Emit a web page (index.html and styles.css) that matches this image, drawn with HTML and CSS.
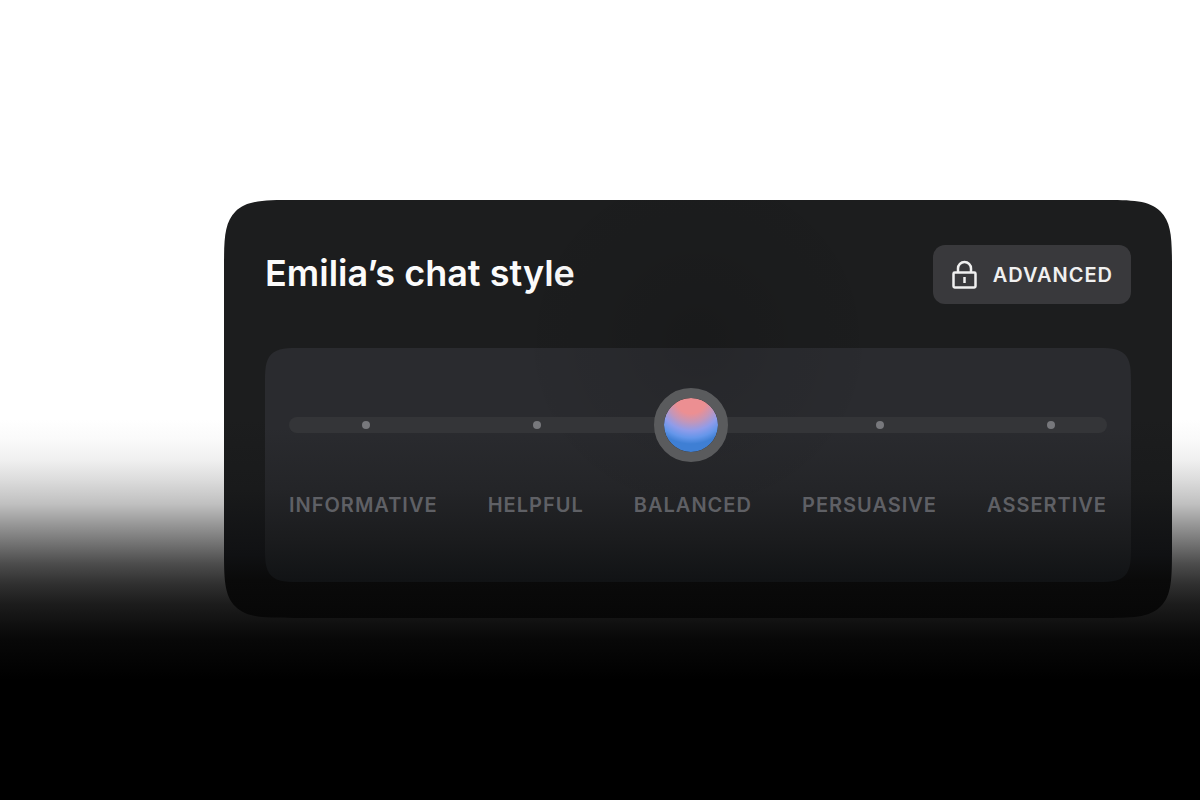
FILE: index.html
```html
<!DOCTYPE html>
<html lang="en">
<head>
    <meta charset="UTF-8">
    <meta name="viewport" content="width=device-width, initial-scale=1.0">
    <title>Chat style</title>
    <link rel="stylesheet" href="styles.css">
</head>
<body>
    <main class="card">
        <div class="card-header">
            <h1 class="title" id="styleTitle">Emilia’s chat style</h1>
            <button class="advanced-btn" type="button">
                <svg width="26" height="30" viewBox="0 0 26 30" fill="none" stroke="currentColor" stroke-width="2.5" aria-hidden="true">
                    <rect x="2.5" y="12.5" width="22" height="15" rx="1.2"/>
                    <path d="M7 12.5V8.5a6.5 6.5 0 0 1 13 0V12.5"/>
                    <path d="M13.5 17v6"/>
                </svg>
                ADVANCED
            </button>
        </div>
        <div class="panel">
            <div class="slider">
                <div class="track">
                    <span class="dot"></span>
                    <span class="dot"></span>
                    <span class="dot"></span>
                    <span class="dot"></span>
                    <span class="dot"></span>
                </div>
                <input class="range" type="range" min="0" max="100" value="49" aria-labelledby="styleTitle">
            </div>
            <div class="labels">
                <span>INFORMATIVE</span>
                <span>HELPFUL</span>
                <span>BALANCED</span>
                <span>PERSUASIVE</span>
                <span>ASSERTIVE</span>
            </div>
        </div>
    </main>
</body>
</html>
```
FILE: styles.css
```css
* {
    box-sizing: border-box;
}

body {
    margin: 0;
    min-height: 100vh;
    padding: 200px 28px 40px 224px;
    font-family: Inter, "Liberation Sans", sans-serif;
    background: linear-gradient(#fff 420px, #fafafa 440px, #f0f0f0 460px, #dcdcdc 480px, #c0c0c0 504px, #989898 524px, #727272 544px, #4c4c4c 564px, #303030 584px, #1c1c1c 604px, #101010 624px, #080808 640px, #000 680px);
}

.card {
    position: relative;
    padding: 45px 41px 36px;
    border-radius: 44px;
    background: linear-gradient(#1c1d1e 220px, #191a1b 290px, #101113 355px, #0a0a0a 380px, #070707 417px);
}

/* faint shadow behind the knob */
.card::after {
    content: "";
    position: absolute;
    inset: 0;
    border-radius: inherit;
    background: radial-gradient(circle at 50% 140px, rgba(0, 0, 0, 0.11) 0, rgba(0, 0, 0, 0.06) 70px, rgba(0, 0, 0, 0.02) 160px, transparent 170px);
    pointer-events: none;
}

.card-header {
    display: flex;
    justify-content: space-between;
    align-items: center;
    margin-bottom: 44px;
}

.title {
    margin: 0;
    padding-bottom: 4px;
    font-size: 36px;
    font-weight: 600;
    line-height: 48px;
    color: #fbfbfb;
}

.advanced-btn {
    display: flex;
    align-items: center;
    gap: 16px;
    height: 59px;
    padding: 0 18px;
    border: none;
    border-radius: 12px;
    background-color: #39393c;
    color: #f0f0f0;
    font-family: inherit;
    font-size: 20px;
    font-weight: 600;
    letter-spacing: 1px;
    cursor: pointer;
}

.panel {
    padding: 40px 24px 65px;
    border-radius: 24px;
    background: linear-gradient(#2a2b2f 80px, #242528 140px, #1b1c1e 190px, #111315 233px);
}

.slider {
    position: relative;
    z-index: 1;
    display: grid;
    align-items: center;
    margin-bottom: 31px;
}

.track,
.range {
    grid-area: 1 / 1;
}

.track {
    display: flex;
    justify-content: space-between;
    align-items: center;
    height: 16px;
    padding: 0 52px 0 73px;
    border-radius: 8px;
    background-color: #343538;
}

.dot {
    width: 8px;
    height: 8px;
    border-radius: 50%;
    background-color: #77787c;
}

.range {
    appearance: none;
    width: 100%;
    height: 74px;
    margin: 0;
    background: transparent;
    cursor: pointer;
}

.range::-webkit-slider-thumb {
    appearance: none;
    width: 74px;
    height: 74px;
    border: 10px solid #5a5b5d;
    border-radius: 50%;
    background: radial-gradient(circle at 50% 0, #ec8f92 26%, #c496b8 40%, #8f9cea 54%, #6496ea 66%, #3f7fd4 76%) padding-box;
}

.labels {
    display: flex;
    justify-content: space-between;
    font-size: 20px;
    font-weight: 600;
    line-height: 24px;
    letter-spacing: 1px;
    color: #5f6065;
}

@supports (corner-shape: squircle) {
    .card {
        border-radius: 72px;
        corner-shape: squircle;
    }

    .card::after {
        corner-shape: squircle;
    }

    .panel {
        border-radius: 40px;
        corner-shape: squircle;
    }
}
```
